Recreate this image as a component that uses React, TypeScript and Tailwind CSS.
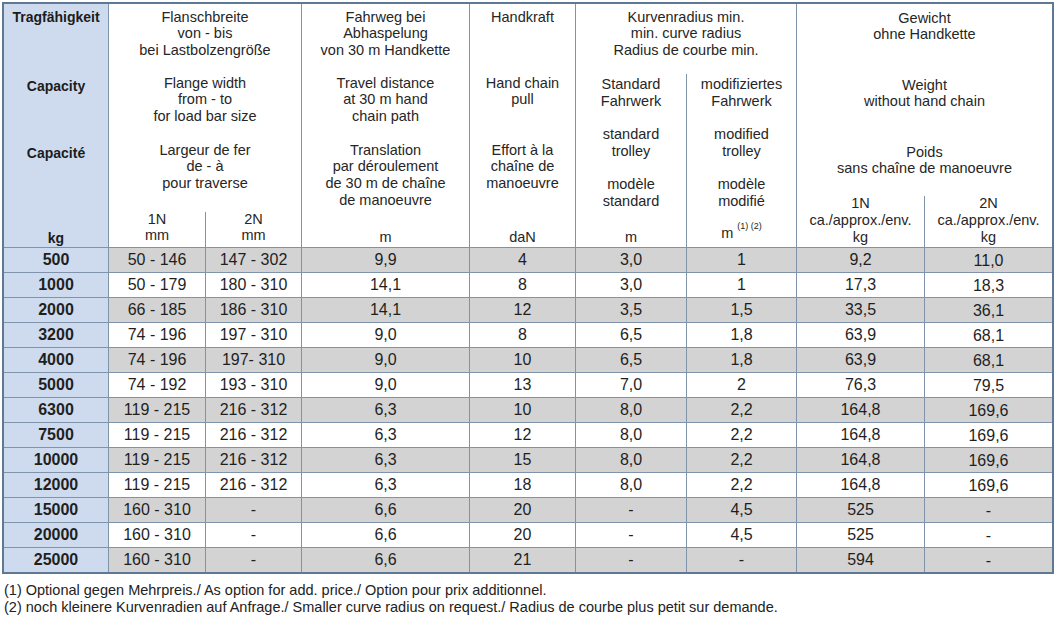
import React from "react";

const line = "border-[#7f93ab]";

const rows: string[][] = [
  ["500", "50 - 146", "147 - 302", "9,9", "4", "3,0", "1", "9,2", "11,0"],
  ["1000", "50 - 179", "180 - 310", "14,1", "8", "3,0", "1", "17,3", "18,3"],
  ["2000", "66 - 185", "186 - 310", "14,1", "12", "3,5", "1,5", "33,5", "36,1"],
  ["3200", "74 - 196", "197 - 310", "9,0", "8", "6,5", "1,8", "63,9", "68,1"],
  ["4000", "74 - 196", "197- 310", "9,0", "10", "6,5", "1,8", "63,9", "68,1"],
  ["5000", "74 - 192", "193 - 310", "9,0", "13", "7,0", "2", "76,3", "79,5"],
  ["6300", "119 - 215", "216 - 312", "6,3", "10", "8,0", "2,2", "164,8", "169,6"],
  ["7500", "119 - 215", "216 - 312", "6,3", "12", "8,0", "2,2", "164,8", "169,6"],
  ["10000", "119 - 215", "216 - 312", "6,3", "15", "8,0", "2,2", "164,8", "169,6"],
  ["12000", "119 - 215", "216 - 312", "6,3", "18", "8,0", "2,2", "164,8", "169,6"],
  ["15000", "160 - 310", "-", "6,6", "20", "-", "4,5", "525", "-"],
  ["20000", "160 - 310", "-", "6,6", "20", "-", "4,5", "525", "-"],
  ["25000", "160 - 310", "-", "6,6", "21", "-", "-", "594", "-"],
];

const widths = [
  "w-[105px]",
  "w-[97px]",
  "w-[96px]",
  "w-[168px]",
  "w-[106px]",
  "w-[111px]",
  "w-[110px]",
  "w-[128px]",
  "flex-1",
];

const Lines = ({ items, className = "" }: { items: string[]; className?: string }) => (
  <div className={className}>
    {items.map((t) => (
      <p key={t}>{t}</p>
    ))}
  </div>
);

const Header = () => (
  <div className={`flex h-[244px] border-b ${line} text-[14.5px] leading-[16.7px] text-[#262626] text-center`}>
    {/* Capacity */}
    <div className={`w-[105px] shrink-0 bg-[#cedbee] border-r ${line} flex flex-col items-center font-bold text-[14px] leading-[17px] text-[#1c1c1c]`}>
      <p className="mt-[5px]">Tragfähigkeit</p>
      <p className="mt-[52px]">Capacity</p>
      <p className="mt-[50px]">Capacité</p>
      <p className="mt-auto">kg</p>
    </div>

    {/* Flange width */}
    <div className={`w-[193px] shrink-0 border-r ${line} flex flex-col`}>
      <Lines className="mt-[4.5px]" items={["Flanschbreite", "von - bis", "bei Lastbolzengröße"]} />
      <Lines className="mt-[16px]" items={["Flange width", "from - to", "for load bar size"]} />
      <Lines className="mt-[17px]" items={["Largeur de fer", "de - à", "pour traverse"]} />
      <div className="mt-auto flex h-[35px]">
        <div className={`w-[97px] border-r ${line} flex flex-col justify-end pb-[3px]`}>
          <p>1N</p>
          <p>mm</p>
        </div>
        <div className="flex-1 flex flex-col justify-end pb-[3px]">
          <p>2N</p>
          <p>mm</p>
        </div>
      </div>
    </div>

    {/* Travel */}
    <div className={`w-[168px] shrink-0 border-r ${line} flex flex-col`}>
      <Lines className="mt-[4.5px]" items={["Fahrweg bei", "Abhaspelung", "von 30 m Handkette"]} />
      <Lines className="mt-[16px]" items={["Travel distance", "at 30 m hand", "chain path"]} />
      <Lines
        className="mt-[17px]"
        items={["Translation", "par déroulement", "de 30 m de chaîne", "de manoeuvre"]}
      />
      <p className="mt-auto mb-[1.5px]">m</p>
    </div>

    {/* Hand chain pull */}
    <div className={`w-[106px] shrink-0 border-r ${line} flex flex-col`}>
      <Lines className="mt-[4.5px]" items={["Handkraft"]} />
      <Lines className="mt-[49.4px]" items={["Hand chain", "pull"]} />
      <Lines className="mt-[33.6px]" items={["Effort à la", "chaîne de", "manoeuvre"]} />
      <p className="mt-auto mb-[1.5px]">daN</p>
    </div>

    {/* Curve radius */}
    <div className={`w-[221px] shrink-0 border-r ${line} flex flex-col`}>
      <Lines
        className="mt-[4.5px]"
        items={["Kurvenradius min.", "min. curve radius", "Radius de courbe min."]}
      />
      <div className="mt-[15px] flex-1 flex">
        <div className={`w-[111px] border-r ${line} flex flex-col pt-[2.6px]`}>
          <Lines items={["Standard", "Fahrwerk"]} />
          <Lines className="mt-[16.6px]" items={["standard", "trolley"]} />
          <Lines className="mt-[16.6px]" items={["modèle", "standard"]} />
          <p className="mt-auto mb-[1.5px]">m</p>
        </div>
        <div className="flex-1 flex flex-col pt-[2.6px]">
          <Lines items={["modifiziertes", "Fahrwerk"]} />
          <Lines className="mt-[16.6px]" items={["modified", "trolley"]} />
          <Lines className="mt-[16.6px]" items={["modèle", "modifié"]} />
          <p className="mt-auto mb-[5px]">
            m <sup className="text-[9px] align-[5px]">(1) (2)</sup>
          </p>
        </div>
      </div>
    </div>

    {/* Weight */}
    <div className="flex-1 flex flex-col">
      <Lines className="mt-[5.6px]" items={["Gewicht", "ohne Handkette"]} />
      <Lines className="mt-[33.6px]" items={["Weight", "without hand chain"]} />
      <Lines className="mt-[33.6px]" items={["Poids", "sans chaîne de manoeuvre"]} />
      <div className="mt-auto flex h-[51px]">
        <div className={`w-[128px] border-r ${line} flex flex-col justify-end pb-[1.5px]`}>
          <p>1N</p>
          <p>ca./approx./env.</p>
          <p>kg</p>
        </div>
        <div className="flex-1 flex flex-col justify-end pb-[1.5px]">
          <p>2N</p>
          <p>ca./approx./env.</p>
          <p>kg</p>
        </div>
      </div>
    </div>
  </div>
);

const Row = ({ cells, index, last }: { cells: string[]; index: number; last: boolean }) => (
  <div
    className={`flex ${last ? "h-[24px]" : `h-[25px] border-b ${line}`} ${
      index % 2 === 0 ? "bg-[#d3d3d3]" : "bg-white"
    } text-[16px] text-[#1f1f1f]`}
  >
    {cells.map((c, i) => (
      <div
        key={i}
        className={`${widths[i]} shrink-0 flex items-center justify-center ${
          i < cells.length - 1 ? `border-r ${line}` : "pt-[2px]"
        } ${i === 0 ? "bg-[#cedbee] font-bold" : ""}`}
      >
        {c}
      </div>
    ))}
  </div>
);

export default function App() {
  return (
    <div className="w-[1056px] h-[617px] bg-white pt-[2px] pl-[2px] font-['Liberation_Sans',Arial,sans-serif] overflow-hidden">
      <div className="w-[1052px] border-2 border-[#5f7995]">
        <Header />
        {rows.map((r, i) => (
          <Row key={r[0]} cells={r} index={i} last={i === rows.length - 1} />
        ))}
      </div>
      <div className="mt-[7.5px] pl-[2px] text-[14.5px] leading-[17px] text-[#222]">
        <p>(1) Optional gegen Mehrpreis./ As option for add. price./ Option pour prix additionnel.</p>
        <p>
          (2) noch kleinere Kurvenradien auf Anfrage./ Smaller curve radius on request./ Radius de courbe
          plus petit sur demande.
        </p>
      </div>
    </div>
  );
}
